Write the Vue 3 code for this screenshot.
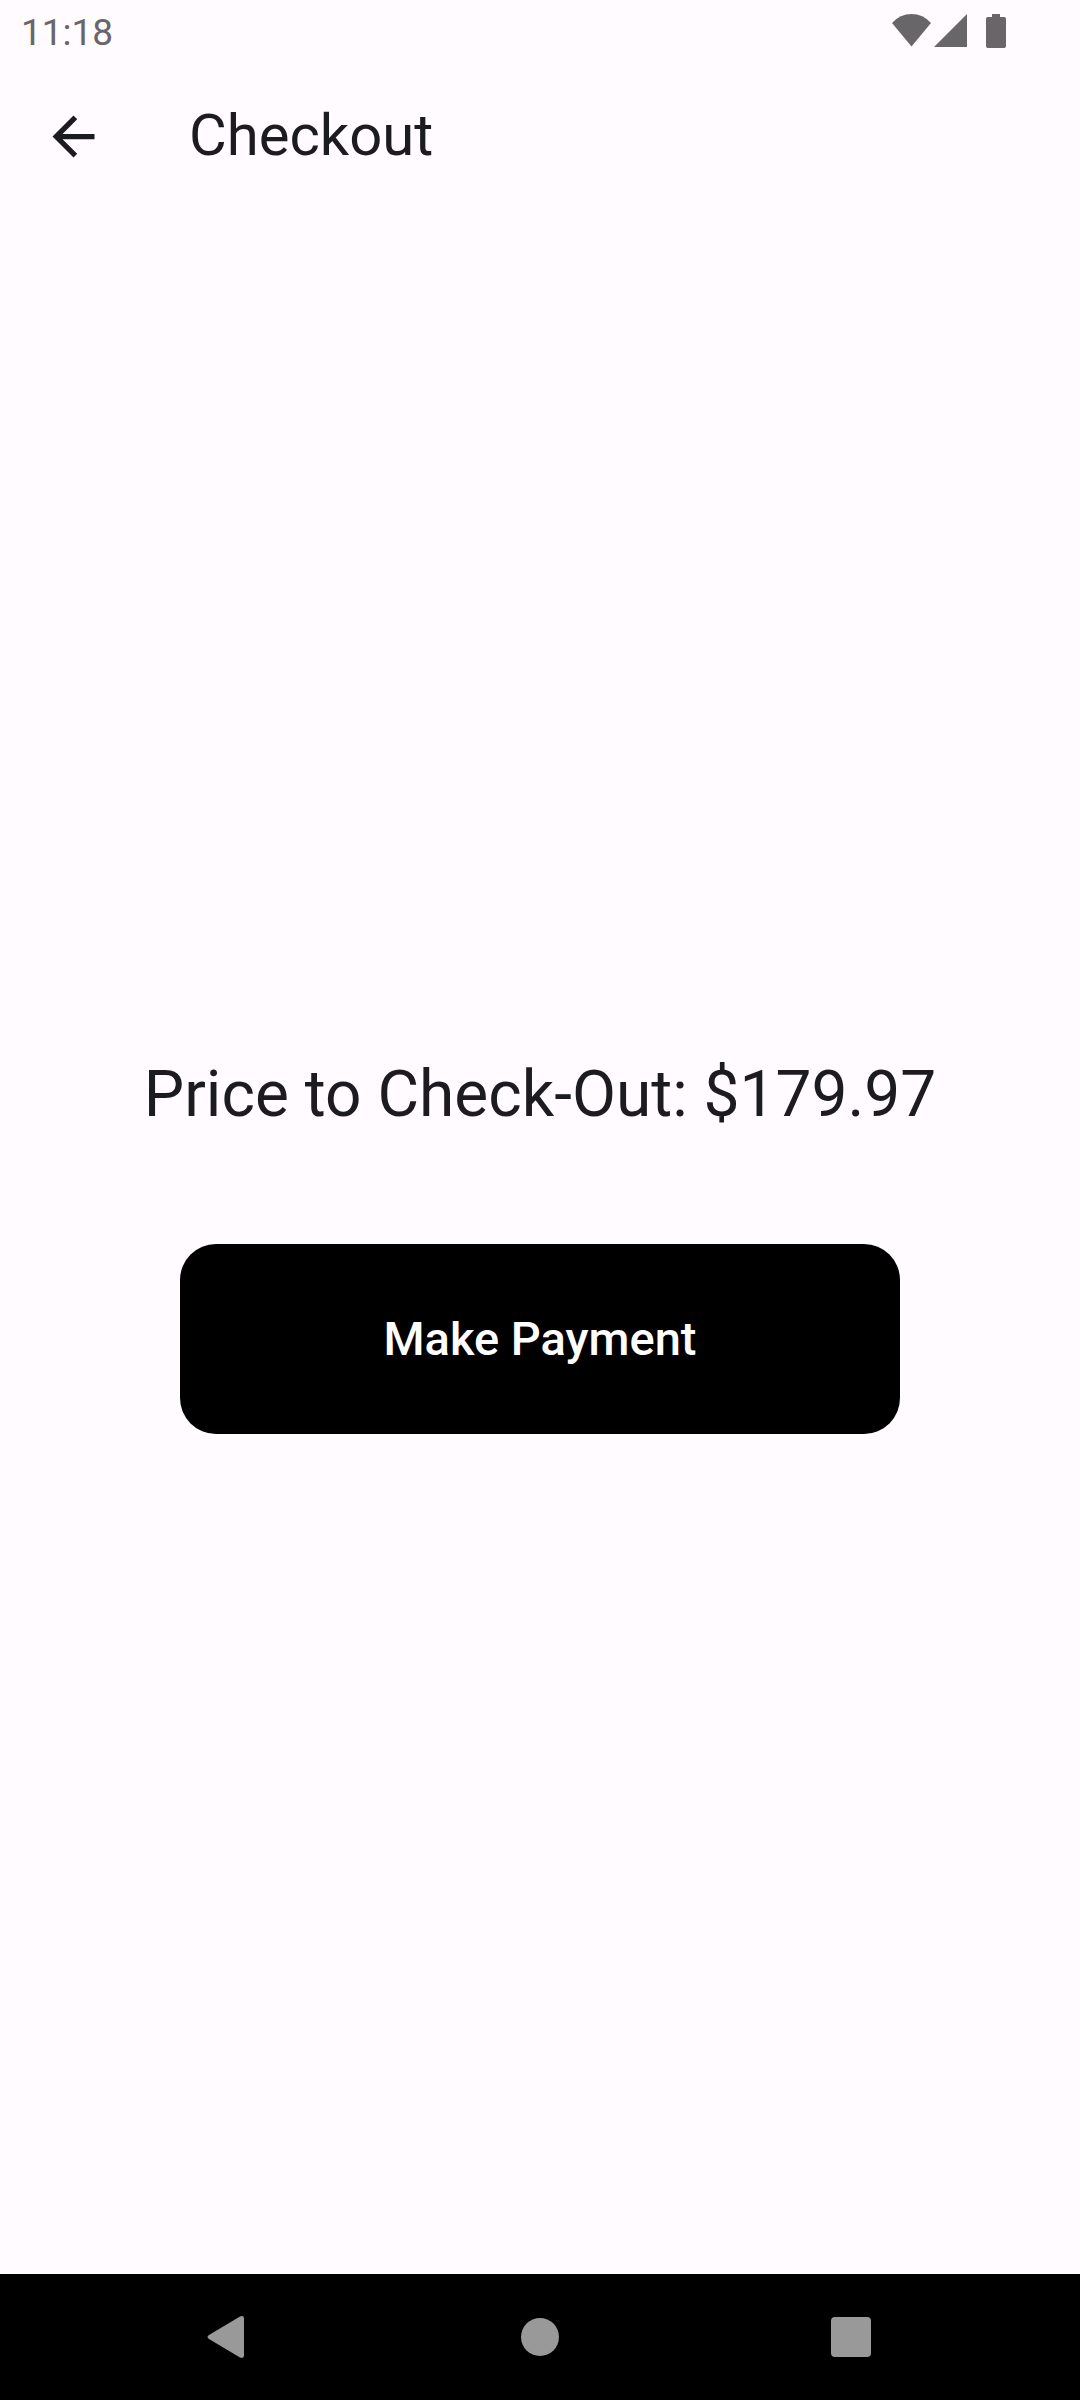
<script setup>
const time = '11:18'
const total = 179.97
</script>

<template>
  <div class="screen">
    <div class="status-bar">
      <span class="time">{{ time }}</span>
      <div class="indicators">
        <svg class="wifi" viewBox="0 0 40 35" aria-hidden="true">
          <path d="M0 9Q8 0 19.500 0T39 9L19.500 32.500Z" />
        </svg>
        <svg class="signal" viewBox="0 0 34 35" aria-hidden="true">
          <path d="M33 0V33H0Z" />
        </svg>
        <svg class="battery" viewBox="0 0 20 35" aria-hidden="true">
          <path d="M6 0H14V3H18Q20 3 20 5V32Q20 34 18 34H2Q0 34 0 32V5Q0 3 2 3H6Z" />
        </svg>
      </div>
    </div>

    <header class="app-bar">
      <button class="back" type="button" aria-label="Back">
        <svg viewBox="0 0 24 24" aria-hidden="true">
          <path d="M20 11H7.830l5.590-5.590L12 4l-8 8 8 8 1.410-1.410L7.830 13H20v-2z" />
        </svg>
      </button>
      <h1>Checkout</h1>
    </header>

    <main class="content">
      <p class="price">Price to Check-Out: ${{ total }}</p>
      <button class="pay" type="button">Make Payment</button>
    </main>

    <nav class="system-nav">
      <button type="button" aria-label="System back">
        <svg viewBox="0 0 84 84" aria-hidden="true">
          <path d="M25 40 56 21.500Q60 20 60 23.500V60.500Q60 64 56 62.500L25 44Q22 42 25 40Z" />
        </svg>
      </button>
      <button type="button" aria-label="Home">
        <svg viewBox="0 0 84 84" aria-hidden="true">
          <circle cx="42" cy="42" r="19" />
        </svg>
      </button>
      <button type="button" aria-label="Recent apps">
        <svg viewBox="0 0 84 84" aria-hidden="true">
          <rect x="19" y="22" width="40" height="40" rx="4" />
        </svg>
      </button>
    </nav>
  </div>
</template>

<style>
body {
  background: #fffbff;
}
</style>

<style scoped>
.screen {
  display: flex;
  flex-direction: column;
  min-height: 100vh;
  background: #fffbff;
  color: #1c1b1f;
  font-family: Roboto, sans-serif;
}

button {
  margin: 0;
  padding: 0;
  border: 0;
  background: none;
  color: inherit;
  font-family: inherit;
  cursor: pointer;
}

svg {
  display: block;
  fill: currentColor;
}

.status-bar {
  display: flex;
  justify-content: space-between;
  align-items: center;
  height: 63px;
  padding: 0 74px 0 21px;
  color: #69666a;
}

.time {
  padding-top: 2px;
  font-size: 37px;
  line-height: 64px;
}

.indicators {
  display: flex;
}

.indicators svg {
  height: 35px;
}

.wifi {
  width: 40px;
}

.signal {
  width: 34px;
  margin-left: 2px;
}

.battery {
  width: 20px;
  margin-left: 18px;
}

.app-bar {
  display: flex;
  align-items: center;
  gap: 42px;
  height: 147px;
}

.back {
  display: grid;
  place-items: center;
  width: 147px;
  height: 147px;
}

.back svg {
  width: 63px;
  height: 63px;
}

h1 {
  margin: 0;
  padding-bottom: 4px;
  font-size: 58px;
  font-weight: 400;
  line-height: 74px;
}

.content {
  flex: 1;
  display: flex;
  flex-direction: column;
  align-items: center;
  justify-content: center;
  gap: 104px;
}

.price {
  margin: 0;
  font-size: 64px;
  line-height: 90px;
}

.pay {
  width: 66.667%;
  height: 190px;
  padding-bottom: 2px;
  border-radius: 36px;
  background: #000;
  color: #fff;
  font-size: 47px;
  font-weight: 500;
}

.system-nav {
  display: flex;
  justify-content: space-between;
  align-items: center;
  height: 126px;
  padding: 0 17%;
  background: #000;
  color: #999;
}

.system-nav svg {
  width: 84px;
  height: 84px;
}
</style>
